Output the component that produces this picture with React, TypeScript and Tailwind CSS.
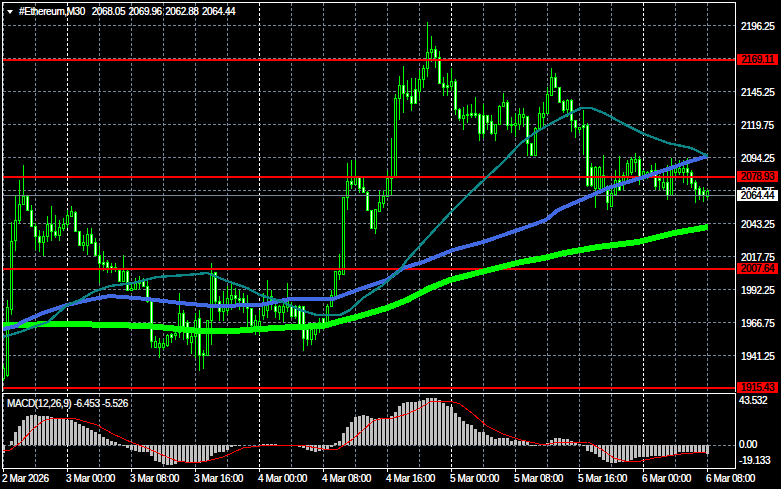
// MT4 style chart, #Ethereum M30 with MACD sub window

// high, low, body top, body bottom, bull (pixel rows of the screen). Bars are 4px apart from x=3.
const candles: number[][] = [
  [365,381,368,378,1],[300,377,307,375,1],[222,315,241,309,1],[195,251,220,240,1],[180,224,204,220,1],[165,205,196,204,1],[195,210,196,210,0],[205,226,210,226,0],
  [223,250,226,236,0],[230,252,236,242,0],[231,256,236,242,1],[216,242,224,236,1],[206,241,224,231,0],[215,238,231,235,0],[220,241,227,235,1],[218,231,224,228,1],
  [210,228,215,224,1],[206,216,211,216,1],[211,231,212,231,0],[231,246,231,245,0],[235,251,242,245,1],[228,255,234,245,1],[228,243,234,243,0],[238,256,242,255,0],
  [246,283,255,263,0],[251,271,262,264,0],[260,273,262,267,0],[263,273,266,268,0],[263,272,267,268,0],[268,281,270,281,0],[255,281,271,281,1],[270,290,271,290,0],
  [283,291,288,290,1],[278,289,282,289,1],[276,289,280,283,1],[278,286,280,286,0],[280,303,286,301,0],[301,348,301,341,0],[336,348,341,347,1],[338,358,343,347,1],
  [339,350,343,347,1],[334,347,335,345,1],[333,343,334,337,0],[330,340,333,335,1],[293,338,313,332,1],[310,340,313,326,0],[320,345,322,338,0],[330,354,336,342,1],
  [313,358,320,336,1],[310,371,318,355,0],[350,369,353,355,0],[320,355,320,355,1],[263,345,273,320,1],[272,305,272,301,0],[296,321,301,311,0],[291,321,306,311,1],
  [286,315,298,310,1],[281,310,295,299,1],[288,306,295,298,0],[290,310,298,300,0],[293,313,298,305,0],[295,330,303,308,0],[308,330,308,325,0],[315,335,320,330,1],
  [310,335,321,330,1],[293,320,303,315,1],[280,318,302,310,1],[290,310,296,300,0],[300,318,306,311,0],[305,320,306,312,1],[303,322,306,312,1],[283,312,300,307,1],
  [302,318,306,316,0],[305,319,306,316,0],[305,326,306,326,0],[306,351,306,338,0],[325,346,329,339,0],[327,345,329,339,1],[326,340,328,334,1],[318,333,322,326,1],
  [318,330,318,326,0],[304,326,306,326,1],[290,306,295,306,1],[271,298,271,296,1],[254,280,271,274,1],[197,275,197,274,1],[163,210,181,197,1],[160,189,181,184,0],
  [160,185,176,184,1],[176,193,176,188,0],[178,193,187,192,0],[191,210,192,210,0],[210,229,210,228,0],[209,234,209,228,1],[191,212,202,211,1],[191,208,196,203,1],
  [171,196,178,196,1],[138,196,177,178,1],[94,177,98,177,1],[76,120,85,98,1],[66,113,85,93,0],[80,100,93,96,0],[78,111,96,103,0],[78,103,89,103,0],
  [70,101,79,91,1],[65,88,68,79,1],[22,77,52,68,1],[36,62,49,52,1],[46,68,49,57,0],[51,84,57,83,0],[77,96,83,87,0],[73,96,85,87,0],
  [68,91,81,86,1],[79,115,81,109,0],[108,121,109,118,0],[107,130,115,118,1],[105,123,114,115,0],[104,118,113,115,0],[97,118,113,115,0],[113,141,114,133,0],
  [104,138,115,133,0],[115,130,115,122,0],[115,135,121,133,0],[124,141,124,133,1],[105,125,106,124,1],[93,106,102,106,1],[100,130,102,125,0],[117,133,124,125,0],
  [113,137,123,125,1],[108,130,114,124,1],[108,127,114,117,1],[116,156,116,143,0],[143,156,143,155,0],[127,156,128,155,1],[107,128,113,128,1],[102,127,113,117,1],
  [87,113,94,113,1],[68,95,77,95,1],[73,87,77,87,0],[87,102,87,102,0],[100,113,101,110,0],[99,117,100,109,1],[99,132,100,120,0],[120,138,120,127,0],
  [127,133,127,129,1],[110,155,125,127,0],[123,187,125,185,0],[163,187,167,185,0],[166,208,167,188,1],[166,190,167,188,1],[155,192,175,188,1],[185,210,190,202,0],
  [187,207,193,206,1],[170,195,180,194,1],[156,190,180,190,0],[172,190,175,182,1],[160,180,163,177,1],[157,175,159,172,1],[153,172,159,162,1],[156,185,159,176,0],
  [170,180,171,175,1],[171,179,172,175,1],[165,178,170,174,0],[163,190,170,186,0],[175,190,178,180,0],[170,190,182,187,1],[165,200,182,195,0],[158,196,168,195,1],
  [163,176,165,172,1],[160,175,168,172,1],[160,183,168,172,1],[158,185,168,172,0],[170,188,172,183,0],[180,203,182,189,0],[186,200,188,195,0],[187,202,191,195,0],
  [189,199,191,196,1],
];

const histogram = [
  -8,0,4,13,19,25,29,30,30,29,29,29,28,27,27,26,25,25,23,21,19,17,15,13,11,8,6,4,3,1,-1,-3,-5,-6,-7,-7,-7,-11,-16,-17,-19,-20,-20,-19,-17,-17,-18,-18,-18,-18,-17,-16,-11,-8,-7,-7,-5,-2,-1,-1,0,0,0,0,0,
  1,1,1,1,0,0,0,0,0,-2,-3,-5,-6,-7,-6,-5,-4,-2,2,4,12,18,23,28,29,30,29,27,26,27,27,27,29,33,39,42,43,43,43,44,45,47,47,47,45,42,39,38,32,28,24,21,20,16,13,13,10,8,6,7,7,7,4,5,4,
  4,3,-1,-1,0,1,2,5,7,7,6,6,4,3,1,-1,-6,-7,-9,-12,-15,-17,-18,-18,-17,-17,-16,-15,-13,-12,-12,-12,-11,-11,-11,-11,-11,-10,-9,-7,-7,-7,-7,-7,-7,-7,-9,
];

const teal = "3,337 20,332 36,326 48,322 67,305 80,300 93,292 110,286 133,283 157,277 187,275 207,273 227,281 247,288 260,295 280,301 300,310 317,315 340,315 350,310 363,298 383,285 400,270 407,260 427,238 452,211 468,195 487,177 502,163 521,143 536,132 561,118 581,108 591,108 604,113 624,124 644,134 668,143 691,148 708,156";
const blue = "3,329 17,326 20,323 43,313 67,305 93,299 110,296 147,299 180,303 213,306 260,305 290,299 333,299 360,289 387,280 403,268 423,262 453,250 483,242 521,229 546,220 558,210 581,200 608,188 644,177 671,168 688,162 708,156";
const lime = "3,325 73,324 147,326 200,331 233,331 260,329 293,327 323,326 337,322 360,316 387,308 407,300 430,288 450,280 477,273 521,262 544,258 564,253 598,247 638,242 674,233 708,227";
const signal = "3,451 10,450 20,443 33,429 43,421 53,418 73,418 97,425 113,434 133,443 147,448 160,454 177,461 193,463 207,461 223,457 243,448 260,446 270,445 300,445 323,449 338,449 353,439 373,421 383,418 393,418 407,414 420,408 430,402 450,401 460,404 473,414 487,426 503,434 521,440 544,445 554,443 588,442 601,449 614,458 628,462 641,461 654,458 681,454 706,452";

const priceLevels = ["2196.25", "", "2145.25", "2119.75", "2094.25", "2068.75", "2043.25", "2017.75", "1992.25", "1966.75", "1941.25"];
const lineLabels = [
  { text: "2169.11", cls: "top-[54px] bg-[#ff0000]" },
  { text: "2078.93", cls: "top-[171px] bg-[#ff0000]" },
  { text: "2064.44", cls: "top-[190px] bg-white" },
  { text: "2007.64", cls: "top-[263px] bg-[#ff0000]" },
  { text: "1915.43", cls: "top-[382px] bg-[#ff0000]" },
];
const redLines = [60, 177, 269, 388];
const timeLabels = ["2 Mar 2026", "3 Mar 00:00", "3 Mar 08:00", "3 Mar 16:00", "4 Mar 00:00", "4 Mar 08:00", "4 Mar 16:00", "5 Mar 00:00", "5 Mar 08:00", "5 Mar 16:00", "6 Mar 00:00", "6 Mar 08:00"];

const gridX = Array.from({ length: 23 }, (_, i) => 3 + 32 * i);
const isDayLine = (x: number) => x === 67 || x === 259 || x === 451 || x === 643;

function VerticalGrid({ y1, y2 }: { y1: number; y2: number }) {
  return (
    <>
      {gridX.map((x) => (
        <line key={x} x1={x + 0.5} x2={x + 0.5} y1={y1} y2={y2} stroke={isDayLine(x) ? "#ffffff" : "#778899"} strokeDasharray="3 2" />
      ))}
    </>
  );
}

function MainChart() {
  return (
    <svg width="732" height="389" viewBox="3 3 732 389" shapeRendering="crispEdges" className="block">
      <VerticalGrid y1={3} y2={392} />
      {[25, 58, 91, 124, 157, 190, 223, 256, 289, 322, 355].map((y) => (
        <line key={y} x1={3} x2={735} y1={y + 0.5} y2={y + 0.5} stroke="#778899" strokeDasharray="3 2" />
      ))}
      {candles.map(([h, l, t, b, bull], i) => {
        const x = 3 + 4 * i;
        return (
          <g key={i}>
            <line x1={x + 0.5} x2={x + 0.5} y1={h} y2={l} stroke="#00ff00" />
            <rect x={x - 0.5} y={t + 0.5} width={2} height={Math.max(b - t, 1)} fill={bull ? "#000000" : "#ffffff"} stroke="#00ff00" />
          </g>
        );
      })}
      <line x1={3} x2={735} y1={195.5} y2={195.5} stroke="#778899" />
      {redLines.map((y) => (
        <line key={y} x1={3} x2={735} y1={y} y2={y} stroke="#ff0000" strokeWidth={2} />
      ))}
      <polyline points={lime} fill="none" stroke="#00ff00" strokeWidth={6} />
      <polyline points={blue} fill="none" stroke="#4169e1" strokeWidth={4} />
      <polyline points={teal} fill="none" stroke="#0b8585" strokeWidth={2.4} />
    </svg>
  );
}

function MacdChart() {
  return (
    <svg width="732" height="74" viewBox="3 394 732 74" shapeRendering="crispEdges" className="block">
      <VerticalGrid y1={394} y2={468} />
      <line x1={3} x2={735} y1={445.5} y2={445.5} stroke="#778899" strokeDasharray="3 2" />
      {histogram.map((v, i) => {
        const x = 3 + 4 * i - 1;
        return v === 0 ? null : <rect key={i} x={x} y={v > 0 ? 445 - v : 445} width={3} height={Math.abs(v)} fill="#c0c0c0" />;
      })}
      <polyline points={signal} fill="none" stroke="#ff0000" strokeWidth={1} />
    </svg>
  );
}

export default function App() {
  return (
    <div className="relative flex h-[489px] w-[781px] overflow-hidden bg-black pl-[2px] pt-[2px] font-['Liberation_Sans',Arial,sans-serif] text-[10px] leading-none tracking-[-0.4px] text-white [text-shadow:0_0_0.6px_#ffffff]">
      <div className="flex w-[734px] flex-col">
        <div className="relative h-[390px] border-l border-r border-t border-white">
          <MainChart />
          <div className="absolute left-[4px] top-[3px] flex items-center gap-[6px] whitespace-pre leading-[11px] [word-spacing:1px]">
            <span className="h-0 w-0 border-x-[3px] border-t-[4px] border-x-transparent border-t-white" />
            <span>#Ethereum,M30  2068.05 2069.96 2062.88 2064.44</span>
          </div>
        </div>
        <div className="relative mt-[1px] h-[76px] border border-white">
          <MacdChart />
          <span className="absolute left-[4px] top-[4px] leading-[11px] text-[#e8e8e8]">MACD(12,26,9) -6.453 -5.526</span>
        </div>
        <div className="flex">
          {timeLabels.map((t) => (
            <div key={t} className="relative w-[64px] shrink-0 whitespace-nowrap pt-[5px]">
              <span className="absolute left-[1px] top-0 h-[3px] w-px bg-white" />
              {t}
            </div>
          ))}
        </div>
      </div>

      <div className="flex flex-col pl-[5px]">
        <div className="flex h-[390px] flex-col pt-[8px]">
          {priceLevels.map((p, i) => (
            <div key={i} className="flex h-[33px] shrink-0 items-center">{p}</div>
          ))}
        </div>
        <div className="relative mt-[1px] h-[76px]">
          <span className="absolute -left-[2px] top-[3px]">43.532</span>
          <span className="absolute -left-[2px] top-[47px]">0.00</span>
          <span className="absolute -left-[2px] top-[63px]">-19.133</span>
        </div>
      </div>

      {lineLabels.map((l) => (
        <div key={l.text} className={`absolute left-[737px] flex h-[11px] w-[41px] items-center justify-center text-black [text-shadow:0_0_0.6px_#000000] ${l.cls}`}>
          {l.text}
        </div>
      ))}
    </div>
  );
}
